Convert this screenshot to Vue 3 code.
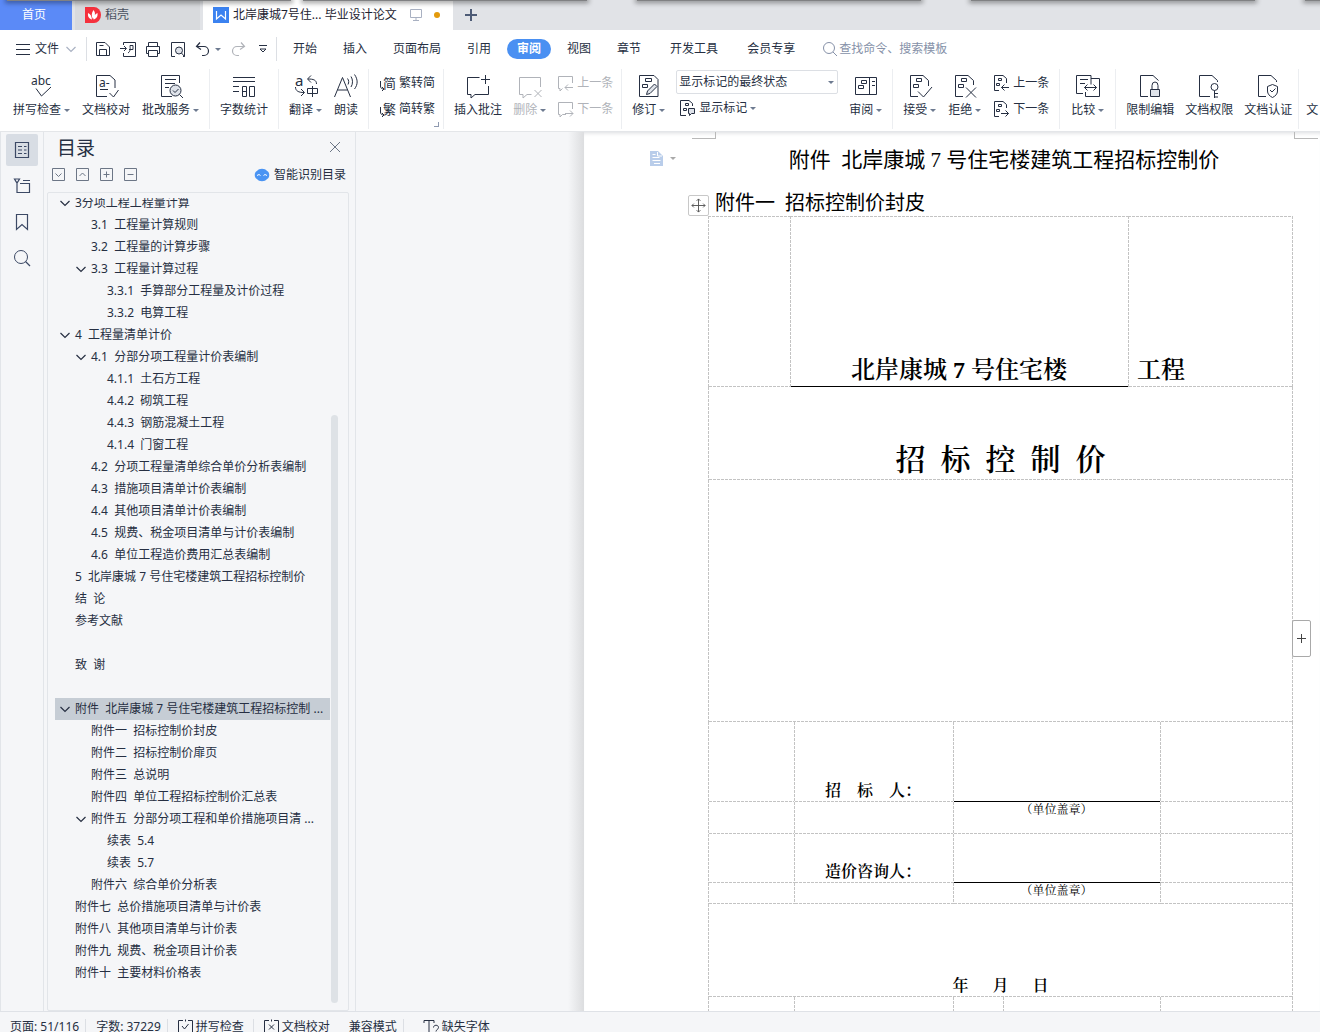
<script setup>
import { h, ref } from 'vue'

const glyphs = {
  spell: '<text x="3" y="12" font-size="12" fill="currentColor" stroke="none">abc</text><path d="M8 15.5l5.5 7.5L23 14"/>',
  proof: '<path d="M15 23.5H4.5v-21H18l5 4.5v8M17.5 20l4 4 5-7M8 16.5h8"/><text x="7" y="14" font-size="12" fill="currentColor" stroke="none">a-</text>',
  correct: '<path d="M15 23.5H4.5v-21h18V10M8 6.5h11M8 10.5h10M8 14.5h4"/><circle cx="18.5" cy="17.5" r="5.5" fill="#dfe3ea"/><path d="M16 17.5l2 2 3.500-3.500M22.500 21.500l3.500 3.500"/>',
  count: '<path d="M3 4.5h22M3 8.500h22M3 13.500h6M3 18.500h6M12.500 13.500h4v10h-4zM12.500 18.500h4M19.500 13.500h5v10h-5z"/>',
  translate: '<text x="3" y="13" font-size="15" fill="currentColor" stroke="none">a</text><path d="M24.500 11c0-4-3-5-8.500-5M19 2.500L15.500 6 19 9.500M3.500 14c0 4 3 5.500 8.500 5.500M9 16l3.500 3.500L9 23M15.500 15.500h10v5h-10zM20.500 13v11"/>',
  read: '<path d="M2.500 24l8-19.500 8 19.500M5.500 17h10M15.500 5.500c1.500 2 1.500 4 .5 6M19 3.500c2 3 2 7.500 0 10.500M22.500 1.500c3.500 5 3.500 10 0 14.500"/>',
  insert: '<path d="M15.500 4.500h-12v17H7V25l4-3.500h13.500V13M21.500 2v9M17 6.500h9"/>',
  remove: '<path d="M24.500 14V4.500h-21v17H7V25l4-3.500h4.500M18.500 17l7 7M25.500 17l-7 7"/>',
  revise: '<path d="M4.500 2.500H19l4 4v17H4.500zM10.500 5.500h6v3h-6zM7.500 11.500h5v3h-5z"/><path fill="#dfe3ea" d="M11.500 21.500l1-3.500 7-7 2.500 2.500-7 7z"/>',
  pane: '<path d="M3.500 4.500h21v17h-21zM17.500 4.500v17M9.500 7.500h5v3h-5zM6.500 12.500h5v3h-5zM20 8.500h3M20 12.500h3"/>',
  accept: '<path d="M12 23.500H4.500v-21H17l5.500 5V13M10.500 5.500h5v3h-5zM7.500 11.500h5v3h-5zM12 18.500l5.500 5.500L26 14"/>',
  reject: '<path d="M12 23.500H4.500v-21H17l5.500 5V12M10.500 5.500h5v3h-5zM7.500 11.500h5v3h-5zM15 14.500l10 10M25 14.500l-10 10"/>',
  compare: '<path d="M9 20.500H2.500v-18h14.500v9M17 5.500h8.500v18H11.500V19M6 6.500h8M6 10.500h5M10.500 14.500h12M13.500 11.500l-3 3 3 3M19.500 11.500l3 3-3 3"/>',
  lock: '<path d="M12 23.500H4.500v-21H17l5.500 5M16 16v-3.500a3 3.500 0 0 1 6 0V16"/><path fill="#dfe3ea" d="M14.500 16.500h9v7h-9z"/>',
  key: '<path d="M15 23.500H4.500v-21H17l5.500 5V9M19.500 17.500V25M19.500 20.500H23M19.500 24H23"/><circle cx="19.500" cy="14" r="3.500"/>',
  shield: '<path d="M12 23.500H4.500v-21H17l5.500 5V9M18.500 11.500l5 2v4.500c0 3-2 5-5 6.500-3-1.500-5-3.500-5-6.500v-4.500zM16 17l2 2 3.500-3.500"/>',
  jian: '<text x="4" y="13" font-size="13" fill="currentColor" stroke="none">简</text><path d="M1.500 6v5c0 2 1 3 3.500 3M3 12l2 2-2 2"/>',
  fan: '<text x="4" y="13" font-size="13" fill="currentColor" stroke="none">繁</text><path d="M1.500 6v5c0 2 1 3 3.500 3M3 12l2 2-2 2"/>',
  prevNote: '<path d="M15.500 8V1.500h-14v12H3V16l2.500-2.500M16 12.500H8M11 9.500l-3 3 3 3"/>',
  nextNote: '<path d="M15.500 8V1.500h-14v12H3V16l2.500-2.500H9M8 12.500h8M13 9.500l3 3-3 3"/>',
  marks: '<path d="M7 15.500H1.500v-15H10l3.500 3V6M6.500 3.500h3v2h-3zM4.500 8.500h3v2h-3z"/><path fill="#dfe3ea" d="M9.500 8.500h6v5h-3l-2 2v-2h-1z"/>',
  prevMark: '<path d="M6 15.500H1.500v-15H10l3.500 3V8M5.500 3.500h3v2h-3zM3.500 8.500h3v2h-3zM16 12.500H8.500M11.500 9.500l-3 3 3 3"/>',
  nextMark: '<path d="M6 15.500H1.500v-15H10l3.500 3V7M5.500 3.500h3v2h-3zM3.500 8.500h3v2h-3zM8 12.500h7.500M12.500 9.500l3 3-3 3"/>',
  menu: '<path d="M1 3.500h14M1 8.500h14M1 13.500h14"/>',
  save: '<path d="M1.500 1.500H10l4.500 4.500v8.500h-13zM4.500 14.500v-6h7v6M4.500 4.500h4"/>',
  exportPdf: '<path d="M3.500 4V1.500h12v14h-12V12M0 7.500h6M4 5l2.500 2.500L4 10M8 12c3-2 2-5 2-7.500h3v4H9"/>',
  print: '<path d="M3.500 5V1.500h9V5M3.500 12.500h-2V5.500h13v7h-2M3.500 9.500h9v6h-9z"/>',
  preview: '<path d="M5 15.500H1.500v-14h13V15.500H13"/><circle cx="9" cy="9.500" r="3.500" fill="#dfe3ea"/><path d="M11.500 12l3 3.500"/>',
  undo: '<path d="M5 1.500l-3.500 4 4.500 3M2 5.500h7a4.500 4.500 0 0 1 0 9H7" stroke-width="1.200"/>',
  redo: '<path d="M11 1.500l3.500 4-4.500 3M14 5.500H7a4.500 4.500 0 0 0 0 9h2" stroke-width="1.200"/>',
  more: '<path d="M4 4.500h8M5 8l3 3 3-3z"/>',
  search: '<circle cx="7" cy="7" r="5.500"/><path d="M11 11l4 4"/>',
  find: '<circle cx="7" cy="7" r="6.500"/><path d="M11.500 11.500l4.500 4.500" stroke-width="1.200"/>',
  outline: '<path d="M1.500.5h13v15h-13zM4 4.500h4M10 4.500h2.500M4 8h4M10 8h2.500M4 11.500h4M10 11.500h2.500" stroke-width="1.200"/>',
  chapter: '<path d="M.5 1h5L3 5zM3 5v9.500h12.500v-9H6M9 2.500h7" stroke-width="1.200"/>',
  bookmark: '<path d="M2.500.5h11v15L8 10.500l-5.500 5z" stroke-width="1.200"/>',
  chevDown: '<path d="M3.500 6L8 10.500 12.500 6" stroke-width="1.200"/>',
  close: '<path d="M3 3l10 10M13 3L3 13"/>',
  boxDown: '<path d="M2.500 1.500h12v12h-12zM5.500 6.500l3 3 3-3"/>',
  boxUp: '<path d="M2.500 1.500h12v12h-12zM5.500 9l3-3 3 3"/>',
  boxPlus: '<path d="M2.500 1.500h12v12h-12zM5.500 7.500h6M8.500 4.500v6"/>',
  boxMinus: '<path d="M2.500 1.500h12v12h-12zM5.500 7.500h6"/>',
  plus: '<path d="M8 2v12M2 8h12"/>',
  grow: '<path d="M6.500 2v9M2 6.500h9"/>',
  screen: '<path d="M2.500 2.500h11v8h-11zM8 10.500v3M5 13.500h6"/>',
  move: '<path d="M8 1v14M1 8h14M6 3l2-2 2 2M6 13l2 2 2-2M3 6L1 8l2 2M13 6l2 2-2 2"/>',
  checkBox: '<path d="M6 1.500H1.500v12h14v-12H11M8.500 .5v2M5 7l2.500 3 4-5"/>',
  crossBox: '<path d="M6 1.500H1.500v12h14v-12H11M8.500 .5v2M6 5.500l5 5M11 5.500l-5 5"/>',
  fontLost: '<path d="M1 4V1.500h10V4M6 1.500v13M4 14.500h4M10.500 8.500c0-3 5-3 5 0 0 2-2.500 2-2.500 4M13 14v1.500"/>',
  brain: '<path fill="#4a94f3" stroke="none" d="M3 4c2-3 8-3 10 0 3 1 3 7 0 8-2 3-8 3-10 0-3-1-3-7 0-8z"/><path stroke="#fff" d="M3 8.500l2-1 1.500 1M9.500 8.500l1.500-1 2 1"/>',
  docker: '<path fill="#f5313d" stroke="none" d="M0 0h9a7 8 0 0 1 0 16H0z"/><path fill="#fff" stroke="none" d="M8.500 3c2.500 3 1.500 6-.5 9C6 9 6.500 6 8.500 3zM3 6c2.500 1 3.500 3 4 6.500C4.500 12 2.500 10 3 6zM12.500 6c.5 4-1.500 6-4 6.500 0-3 1.500-5.500 4-6.500z"/>',
  writer: '<path fill="#3b82f0" stroke="none" d="M0 0h16v16H0z"/><path stroke="#fff" stroke-width="1.200" d="M3.500 4v8L8 8l4.500 4V4"/>',
  note: '<path fill="#b9cdea" stroke="none" d="M1 1h8l5 5v10H1z"/><path stroke="#fff" d="M3.500 4.500h3M3.500 7.500h7M3.500 10.500h8M5 13.500h6M8.500 2v4H13"/>'
}

function Glyph({ name, w = 16, t = 16 }) {
  return h('svg', {
    width: w, height: t, viewBox: `0 0 ${w} ${t}`, fill: 'none',
    stroke: 'currentColor', 'stroke-width': 1, 'aria-hidden': 'true', innerHTML: glyphs[name]
  })
}
Glyph.props = ['name', 'w', 't']

const quick = ['save', 'exportPdf', 'print', 'preview']
const menus = ['开始', '插入', '页面布局', '引用', '审阅', '视图', '章节', '开发工具', '会员专享']
const activeMenu = ref('审阅')

const big = (icon, label, caret = false, off = false) => ({ icon, label, caret, off })
const groups = [
  { kind: 'loose', items: [big('spell', '拼写检查', true), big('proof', '文档校对'), big('correct', '批改服务', true)] },
  { kind: 'loose', items: [big('count', '字数统计')] },
  { kind: 'loose', items: [big('translate', '翻译', true), big('read', '朗读')] },
  { kind: 'tight', items: [{ stack: [big('jian', '繁转简'), big('fan', '简转繁')], corner: true }] },
  { kind: 'tight', items: [big('insert', '插入批注'), big('remove', '删除', true, true),
    { stack: [big('prevNote', '上一条', false, true), big('nextNote', '下一条', false, true)] }] },
  { kind: '', items: [big('revise', '修订', true), { state: true }, big('pane', '审阅', true)] },
  { kind: 'loose', items: [big('accept', '接受', true), big('reject', '拒绝', true),
    { stack: [big('prevMark', '上一条'), big('nextMark', '下一条')] }] },
  { kind: 'wide', items: [big('compare', '比较', true)] },
  { kind: '', items: [big('lock', '限制编辑'), big('key', '文档权限'), big('shield', '文档认证')] }
]

const rail = [['outline', '目录'], ['chapter', '章节'], ['bookmark', '书签'], ['find', '查找']]
const levels = [['boxDown', '展开'], ['boxUp', '收起'], ['boxPlus', '增加级别'], ['boxMinus', '减少级别']]
const tree = [
  [0, '3分项工程工程量计算', true],
  [1, '3.1  工程量计算规则'],
  [1, '3.2  工程量的计算步骤'],
  [1, '3.3  工程量计算过程', true],
  [2, '3.3.1  手算部分工程量及计价过程'],
  [2, '3.3.2  电算工程'],
  [0, '4  工程量清单计价', true],
  [1, '4.1  分部分项工程量计价表编制', true],
  [2, '4.1.1  土石方工程'],
  [2, '4.4.2  砌筑工程'],
  [2, '4.4.3  钢筋混凝土工程'],
  [2, '4.1.4  门窗工程'],
  [1, '4.2  分项工程量清单综合单价分析表编制'],
  [1, '4.3  措施项目清单计价表编制'],
  [1, '4.4  其他项目清单计价表编制'],
  [1, '4.5  规费、税金项目清单与计价表编制'],
  [1, '4.6  单位工程造价费用汇总表编制'],
  [0, '5  北岸康城 7 号住宅楼建筑工程招标控制价'],
  [0, '结  论'],
  [0, '参考文献'],
  [0, ''],
  [0, '致  谢'],
  [0, ''],
  [0, '附件  北岸康城 7 号住宅楼建筑工程招标控制 ...', true],
  [1, '附件一  招标控制价封皮'],
  [1, '附件二  招标控制价扉页'],
  [1, '附件三  总说明'],
  [1, '附件四  单位工程招标控制价汇总表'],
  [1, '附件五  分部分项工程和单价措施项目清 ...', true],
  [2, '续表  5.4'],
  [2, '续表  5.7'],
  [1, '附件六  综合单价分析表'],
  [0, '附件七  总价措施项目清单与计价表'],
  [0, '附件八  其他项目清单与计价表'],
  [0, '附件九  规费、税金项目计价表'],
  [0, '附件十  主要材料价格表']
]
const current = ref(23)

// Held as strings so that runs of spaces survive template whitespace condensing.
const doc = {
  title: '附件  北岸康城 7 号住宅楼建筑工程招标控制价',
  subtitle: '附件一  招标控制价封皮',
  heading: '招  标  控  制  价',
  date: '年　  月　  日'
}
</script>

<template>
  <div class="app">
    <div class="shade"><i></i><i></i><i></i><i></i><i></i></div>
    <nav class="tabs">
      <button class="tab home">首页</button>
      <button class="tab docer"><Glyph name="docker" />稻壳</button>
      <button class="tab doc"><Glyph name="writer" /><span class="name">北岸康城7号住... 毕业设计论文</span><Glyph name="screen" class="pale" /><i class="dot"></i></button>
      <button class="add" aria-label="新建"><Glyph name="plus" /></button>
    </nav>

    <header class="menubar">
      <button class="file"><Glyph name="menu" />文件<Glyph name="chevDown" class="pale" /></button>
      <div class="quick">
        <button v-for="q in quick" :key="q" :aria-label="q"><Glyph :name="q" /></button>
        <button class="undo" aria-label="撤销"><Glyph name="undo" /><i class="caret"></i></button>
        <button class="off" aria-label="恢复"><Glyph name="redo" /></button>
        <button aria-label="更多"><Glyph name="more" /></button>
      </div>
      <button v-for="(m, i) in menus" :key="m" class="menu" :class="{ on: m === activeMenu, far: i > 6 }" @click="activeMenu = m">{{ m }}</button>
      <label class="find"><Glyph name="search" /><input type="text" placeholder="查找命令、搜索模板"></label>
    </header>

    <div class="ribbon">
      <div v-for="(g, gi) in groups" :key="gi" class="group" :class="g.kind">
        <template v-for="(b, bi) in g.items" :key="bi">
          <div v-if="b.stack" class="stack">
            <button v-for="s in b.stack" :key="s.label" class="small" :class="{ off: s.off }"><Glyph :name="s.icon" :w="17" :t="17" />{{ s.label }}</button>
            <i v-if="b.corner" class="corner"></i>
          </div>
          <div v-else-if="b.state" class="stack state">
            <div class="pick">
              <select aria-label="标记状态"><option>显示标记的最终状态</option></select>
              <i class="caret"></i>
            </div>
            <button class="small"><Glyph name="marks" :w="17" :t="17" />显示标记<i class="caret"></i></button>
          </div>
          <button v-else class="big" :class="{ off: b.off }">
            <Glyph :name="b.icon" :w="28" :t="26" />
            <span class="label">{{ b.label }}<i v-if="b.caret" class="caret"></i></span>
          </button>
        </template>
      </div>
      <button class="big tail">文</button>
    </div>

    <main class="body">
      <aside class="rail">
        <button v-for="(r, i) in rail" :key="r[0]" :class="{ on: i === 0 }" :aria-label="r[1]"><Glyph :name="r[0]" /></button>
      </aside>

      <section class="panel">
        <div class="head">
          <h2>目录</h2>
          <button aria-label="关闭"><Glyph name="close" /></button>
        </div>
        <div class="tools">
          <button v-for="l in levels" :key="l[0]" :aria-label="l[1]"><Glyph :name="l[0]" /></button>
          <button class="smart"><Glyph name="brain" />智能识别目录</button>
        </div>
        <div class="treebox">
          <div class="clip">
            <ul>
              <li v-for="(n, i) in tree" :key="i" :class="['l' + n[0], { on: i === current }]" @click="current = i">
                <span class="twist"><Glyph v-if="n[2]" name="chevDown" /></span>{{ n[1] }}
              </li>
            </ul>
          </div>
          <i class="thumb"></i>
        </div>
      </section>

      <section class="canvas">
        <div class="edge"></div>
        <article class="paper">
          <i class="mark left"></i><i class="mark right"></i>
          <span class="note"><Glyph name="note" /><i class="caret"></i></span>
          <span class="grip"><Glyph name="move" /></span>
          <h1>{{ doc.title }}</h1>
          <h3>{{ doc.subtitle }}</h3>
          <table>
            <colgroup><col class="c1"><col class="c2"><col class="c3"><col class="c4"><col class="c5"><col class="c6"><col></colgroup>
            <tbody>
              <tr class="r1"><td></td><td colspan="4" class="ink project">北岸康城 7 号住宅楼</td><td colspan="2" class="suffix">工程</td></tr>
              <tr class="r2"><td colspan="7" class="heading">{{ doc.heading }}</td></tr>
              <tr class="r3"><td colspan="7"></td></tr>
              <tr class="r4"><td colspan="2"></td><td class="who">招　标　人：</td><td colspan="3" class="ink"></td><td></td></tr>
              <tr class="r5"><td colspan="2"></td><td></td><td colspan="3" class="seal">（单位盖章）</td><td></td></tr>
              <tr class="r6"><td colspan="2"></td><td class="who">造价咨询人：</td><td colspan="3" class="ink"></td><td></td></tr>
              <tr class="r7"><td colspan="2"></td><td></td><td colspan="3" class="seal">（单位盖章）</td><td></td></tr>
              <tr class="r8"><td colspan="7" class="date">{{ doc.date }}</td></tr>
              <tr class="r9"><td colspan="2"></td><td></td><td></td><td colspan="2"></td><td></td></tr>
            </tbody>
          </table>
          <button class="grow" aria-label="增加列"><Glyph name="grow" :w="13" :t="13" /></button>
        </article>
      </section>
    </main>

    <footer class="status">
      <span>页面: 51/116</span>
      <span>字数: 37229</span>
      <button><Glyph name="checkBox" />拼写检查</button>
      <button class="open"><Glyph name="crossBox" />文档校对</button>
      <span>兼容模式</span>
      <button class="last"><Glyph name="fontLost" />缺失字体</button>
    </footer>
  </div>
</template>

<style>
body { margin: 0; }
</style>

<style scoped>
* { box-sizing: border-box; }
.app {
  position: relative;
  display: flex;
  flex-direction: column;
  height: 100vh;
  overflow: hidden;
  background: #fff;
  color: #262f42;
  font: 12px/16px "Noto Sans", "Noto Sans CJK SC", sans-serif;
}
button {
  display: flex;
  align-items: center;
  flex: none;
  margin: 0;
  padding: 0;
  border: 0;
  background: none;
  color: inherit;
  font: inherit;
  white-space: nowrap;
}
svg { display: block; flex: none; overflow: visible; }
.caret {
  flex: none;
  width: 0;
  height: 0;
  border: 3px solid transparent;
  border-top-color: #6d7a90;
  border-bottom: 0;
}
.pale { color: #a9b1c2; }
.off { color: #b0b3b9; }

.shade {
  position: absolute;
  top: 0;
  left: 7px;
  right: 0;
  display: flex;
  gap: 12px;
}
.shade i {
  flex: 0 0 284px;
  height: 1px;
  background: #808183;
  box-shadow: 0 0 5px 2px rgba(0, 0, 0, .4);
}
.shade i:nth-child(n + 3) { margin-left: 38px; }

.tabs {
  display: flex;
  flex: none;
  height: 30px;
  background: #e1e3e7;
}
.tab { height: 30px; }
.home {
  justify-content: center;
  width: 72px;
  margin-right: 3px;
  padding-right: 4px;
  background: #5b8af7;
  color: #fff;
}
.docer {
  gap: 4px;
  width: 125px;
  margin-right: 3px;
  padding-left: 10px;
  background: #d8dadd;
  color: #4a5160;
}
.doc {
  gap: 4px;
  width: 250px;
  padding-left: 10px;
  background: #fff;
  color: #1c2230;
}
.name { flex: none; margin-right: 7px; }
.dot {
  width: 6px;
  height: 6px;
  margin-left: 6px;
  border-radius: 50%;
  background: #e39a0c;
}
.add { padding-left: 10px; color: #4d5b76; }
.add svg { stroke-width: 2; }

.menubar {
  display: flex;
  flex: none;
  align-items: center;
  height: 36px;
  padding-top: 2px;
}
.file {
  gap: 4px;
  width: 86px;
  padding-left: 15px;
}
.quick {
  display: flex;
  gap: 9px;
  height: 24px;
  margin-right: 3px;
  padding: 0 5px 0 8px;
  border: solid #dcdfe4;
  border-width: 0 1px;
}
.undo { gap: 4px; }
.menu {
  height: 20px;
  margin: 0 3px;
  padding: 0 10px;
  border-radius: 10px;
}
.menu.on { background: #4a90f2; color: #fff; font-weight: bold; }
.menu.far { margin-left: 6px; }
.find {
  display: flex;
  flex: 1;
  align-items: center;
  gap: 1px;
  margin-left: 14px;
  color: #8691a8;
}
.find input {
  flex: 1;
  min-width: 0;
  padding: 0;
  border: 0;
  outline: 0;
  background: none;
  font: inherit;
}
.find input::placeholder { color: #8691a8; opacity: 1; }

.ribbon {
  position: relative;
  z-index: 1;
  display: flex;
  flex: none;
  height: 66px;
  padding: 3px 0 2px;
  overflow: hidden;
  border-bottom: 1px solid #e4e6e9;
}
.group {
  display: flex;
  flex: none;
  gap: 11px;
  padding: 0 10px;
  border-right: 1px solid #eceef1;
}
.group.loose { gap: 12px; }
.group.tight { padding-right: 8px; }
.group.wide { padding: 0 11px; }
.group:first-child { padding-left: 13px; }
.group:last-of-type { padding-right: 6px; }
.big {
  flex-direction: column;
  gap: 3px;
  padding-top: 4px;
}
.big svg { margin: 0 -2px; }
.label { display: flex; align-items: center; gap: 3px; }
.big.tail { padding: 33px 0 0 7px; }
.stack {
  position: relative;
  display: flex;
  flex-direction: column;
  gap: 10px;
  padding-top: 6px;
}
.small { gap: 3px; height: 16px; }
.corner {
  position: absolute;
  right: -4px;
  bottom: 2px;
  width: 5px;
  height: 5px;
  border: solid #8f9ab0;
  border-width: 0 1px 1px 0;
}
.state { gap: 6px; padding-top: 1px; }
.state .small { padding-left: 3px; }
.pick { position: relative; width: 162px; height: 24px; }
.pick select {
  width: 100%;
  height: 100%;
  padding: 0 2px;
  border: 1px solid #dcdfe4;
  border-radius: 2px;
  appearance: none;
  background: #fff;
  color: inherit;
  font: inherit;
}
.pick .caret { position: absolute; top: 11px; right: 4px; }

.body {
  display: flex;
  flex: 1;
  min-height: 0;
  background: #f5f6f8;
}
.rail {
  display: flex;
  flex: none;
  flex-direction: column;
  gap: 4px;
  width: 44px;
  padding: 2px 5px;
  border: solid #e2e5e9;
  border-width: 0 1px;
  color: #3c4965;
}
.rail button {
  justify-content: center;
  width: 32px;
  height: 32px;
  border-radius: 2px;
}
.rail .on { background: #d8dde4; }
.panel {
  display: flex;
  flex: none;
  flex-direction: column;
  width: 312px;
  padding: 0 6px 0 3px;
  border-right: 1px solid #e2e5e9;
}
.head {
  display: flex;
  justify-content: space-between;
  align-items: center;
  height: 30px;
  padding: 0 6px 0 10px;
}
.head h2 { margin: 0; font: 19px/28px "Noto Sans CJK SC", sans-serif; }
.head button, .tools button { color: #6c7686; }
.tools {
  display: flex;
  gap: 8px;
  height: 30px;
  padding: 0 3px 5px;
}
.tools .smart { gap: 4px; margin-left: auto; color: #262f42; }
.treebox {
  position: relative;
  flex: 1;
  min-height: 0;
  padding: 5px 18px 0 7px;
  border: 1px solid #e2e5e9;
  border-radius: 2px;
}
.clip { height: 100%; overflow: hidden; }
.clip ul { margin: -6px 0 0; padding: 0; list-style: none; }
.clip li {
  display: flex;
  align-items: center;
  height: 22px;
  padding-left: 2px;
  white-space: pre;
}
.clip .l1 { padding-left: 18px; }
.clip .l2 { padding-left: 34px; }
.clip .on { background: #c6cdd5; }
.twist { width: 18px; }
.thumb {
  position: absolute;
  top: 222px;
  right: 10px;
  bottom: 7px;
  width: 7px;
  border-radius: 4px;
  background: #dee2e6;
}

.canvas { display: flex; flex: 1; min-width: 0; }
.edge {
  flex: 0 0 228px;
  background: linear-gradient(to left, #dcdddf, #f5f6f8 16px);
}
.paper {
  position: relative;
  flex: 1;
  min-width: 0;
  padding: 12px 27px 0 124px;
  overflow: hidden;
  background: #fff;
  color: #000;
  box-shadow: inset 0 4px 4px -3px #dadcdf;
  font-family: "Liberation Serif", "Noto Serif CJK SC", "Noto Sans CJK SC", serif;
}
.mark {
  position: absolute;
  top: 0;
  width: 24px;
  height: 7px;
  border: solid #b9b9b9;
  border-width: 0 0 1px;
}
.mark.left { left: 108px; border-right-width: 1px; }
.mark.right { right: 2px; border-left-width: 1px; }
.note {
  position: absolute;
  top: 18px;
  left: 65px;
  display: flex;
  align-items: center;
  gap: 5px;
}
.note .caret { border-top-color: #a9a9a9; }
.grip {
  position: absolute;
  top: 63px;
  left: 104px;
  padding: 2px;
  border: 1px solid #c8c8c8;
  border-radius: 2px;
  background: #fff;
  color: #555;
}
.grip svg { width: 15px; height: 15px; }
h1, h3 {
  margin: 0;
  padding-left: 7px;
  font-family: "Liberation Serif", "Noto Sans CJK SC", sans-serif;
  font-weight: normal;
  white-space: pre;
}
h1 { margin-bottom: 14px; font-size: 21px; line-height: 32px; text-align: center; }
h3 { font-size: 20px; line-height: 26px; }
table {
  width: 100%;
  border-spacing: 0;
  table-layout: fixed;
}
.c1 { width: 82px; }
.c2 { width: 4px; }
.c3 { width: 159px; }
.c4 { width: 50px; }
.c5 { width: 125px; }
.c6 { width: 32px; }
td {
  --across: repeating-linear-gradient(to right, #c3c3c3 0 3px, transparent 3px 4px);
  --down: repeating-linear-gradient(to bottom, #c3c3c3 0 3px, transparent 3px 4px);
  --under: var(--across);
  --over: none;
  --end: none;
  padding: 0;
  background-image: var(--down), var(--under), var(--over), var(--end);
  background-position: left top, 1px 100%, left top, right top;
  background-repeat: no-repeat;
  background-size: 1px 100%, 100% 1px, 100% 1px, 1px 100%;
  vertical-align: bottom;
  white-space: pre;
  font-weight: 600;
}
td:last-child { --end: var(--down); }
td.ink { --under: linear-gradient(#000, #000); }
.r1 td { --over: var(--across); }
.r1 { height: 171px; }
.r2, .r8 { height: 93px; }
.r3 { height: 242px; }
.r4 { height: 80px; }
.r5 { height: 32px; }
.r6 { height: 49px; }
.r7 { height: 21px; }
.r9 { height: 93px; }
.project, .suffix { font-size: 24px; line-height: 34px; }
.project, .heading, .seal, .date { text-align: center; }
td.suffix { padding-left: 9px; }
.heading { font-size: 30px; line-height: 40px; }
td.who { padding-left: 31px; font-size: 16px; line-height: 22px; }
.date { font-size: 16px; line-height: 22px; }
td.seal { vertical-align: top; font-size: 12px; font-weight: normal; line-height: 16px; }
.grow {
  position: absolute;
  top: 488px;
  right: 9px;
  justify-content: center;
  width: 19px;
  height: 37px;
  border: 1px solid #a9a9a9;
  border-radius: 2px;
  background: #fff;
  color: #444;
}

.status {
  display: flex;
  flex: none;
  align-items: flex-start;
  height: 21px;
  padding-top: 7px;
  border-top: 1px solid #dfe2e7;
  background: #f5f6f8;
}
.status > * {
  display: flex;
  align-items: center;
  gap: 3px;
  height: 16px;
  padding: 0 6px 0 10px;
  border-right: 1px solid #dcdfe4;
}
.status button { padding: 0 9px; }
.status .open { border-right: 0; }
.status .last { padding-left: 19px; border-right: 0; }
</style>
